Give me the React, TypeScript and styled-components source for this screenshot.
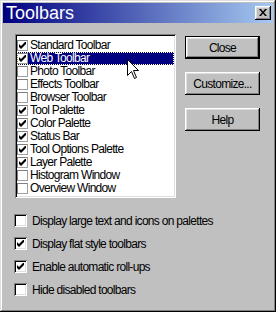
import React from "react";
import styled, { createGlobalStyle } from "styled-components";

const GlobalStyle = createGlobalStyle`
  html, body {
    margin: 0;
    padding: 0;
    background: #c0c0c0;
  }
  body {
    font-family: "Liberation Sans", Arial, sans-serif;
    font-size: 12px;
    letter-spacing: -0.7px;
    color: #000;
  }
`;

const toolbars = [
  { label: "Standard Toolbar", on: true },
  { label: "Web Toolbar", on: true, selected: true },
  { label: "Photo Toolbar", on: false },
  { label: "Effects Toolbar", on: false },
  { label: "Browser Toolbar", on: false },
  { label: "Tool Palette", on: true },
  { label: "Color Palette", on: true },
  { label: "Status Bar", on: true },
  { label: "Tool Options Palette", on: true },
  { label: "Layer Palette", on: true },
  { label: "Histogram Window", on: false },
  { label: "Overview Window", on: false },
];

const options = [
  { label: "Display large text and icons on palettes", on: false },
  { label: "Display flat style toolbars", on: true },
  { label: "Enable automatic roll-ups", on: true },
  { label: "Hide disabled toolbars", on: false },
];

const CheckMark: React.FC = () => (
  <svg width="7" height="7" viewBox="0 0 7 7">
    <path d="M0 2 L2 4 L6 0 L7 0 L7 2 L2 7 L0 5 Z" fill="#000" />
  </svg>
);

const Cursor: React.FC = () => (
  <CursorSvg width="13" height="21" viewBox="0 0 13 21">
    <path
      d="M0.5 0.5 L0.5 16.5 L4.5 12.5 L7.5 19.5 L9.5 18.5 L6.5 11.5 L11.5 11.5 Z"
      fill="#fff"
      stroke="#000"
      strokeWidth="1"
    />
  </CursorSvg>
);

const App: React.FC = () => {
  return (
    <>
      <GlobalStyle />
      <Window>
        <TitleBar>
          <Title>Toolbars</Title>
          <CloseBox>
            <svg width="8" height="7" viewBox="0 0 8 7">
              <path
                d="M0 0 L2 0 L4 2.5 L6 0 L8 0 L5 3.5 L8 7 L6 7 L4 4.5 L2 7 L0 7 L3 3.5 Z"
                fill="#000"
              />
            </svg>
          </CloseBox>
        </TitleBar>
        <Body>
          <TopRow>
            <ListBox>
              {toolbars.map((t) => (
                <ListRow key={t.label} $selected={!!t.selected}>
                  <ListCheck>{t.on && <CheckMark />}</ListCheck>
                  <span>{t.label}</span>
                </ListRow>
              ))}
            </ListBox>
            <Buttons>
              <Button $default>Close</Button>
              <Button>Customize...</Button>
              <Button>Help</Button>
            </Buttons>
          </TopRow>
          <Options>
            {options.map((o) => (
              <OptionRow key={o.label}>
                <SunkenCheck>{o.on && <CheckMark />}</SunkenCheck>
                <span>{o.label}</span>
              </OptionRow>
            ))}
          </Options>
        </Body>
        <Cursor />
      </Window>
    </>
  );
};

export default App;

const Window = styled.div`
  position: relative;
  width: 276px;
  height: 312px;
  box-sizing: border-box;
  padding: 3px;
  background: #c0c0c0;
  box-shadow: inset -1px -1px #000, inset 1px 1px #dfdfdf,
    inset -2px -2px #808080, inset 2px 2px #fff;
`;

const TitleBar = styled.div`
  height: 20px;
  display: flex;
  align-items: center;
  justify-content: space-between;
  padding: 0 2px 0 3px;
  background: linear-gradient(to right, #000080, #a6caf0);
`;

const Title = styled.span`
  color: #fff;
  font-size: 18px;
  letter-spacing: 0;
  line-height: 20px;
`;

const CloseBox = styled.div`
  width: 16px;
  height: 14px;
  box-sizing: border-box;
  display: flex;
  align-items: center;
  justify-content: center;
  background: #c0c0c0;
  box-shadow: inset -1px -1px #000, inset 1px 1px #fff,
    inset -2px -2px #808080, inset 2px 2px #dfdfdf;
  padding-bottom: 1px;
`;

const Body = styled.div`
  padding-top: 11px;
`;

const TopRow = styled.div`
  display: flex;
  margin-left: 12px;
`;

const ListBox = styled.div`
  width: 161px;
  height: 164px;
  box-sizing: border-box;
  padding: 5px 2px 3px 2px;
  background: #fff;
  box-shadow: inset 1px 1px #808080, inset -1px -1px #fff,
    inset 2px 2px #000, inset -2px -2px #dfdfdf;
`;

const ListRow = styled.div<{ $selected: boolean }>`
  height: 13px;
  line-height: 13px;
  display: flex;
  align-items: center;
  gap: 2px;
  white-space: nowrap;
  background: ${(p) => (p.$selected ? "#000080" : "transparent")};
  color: ${(p) => (p.$selected ? "#fff" : "#000")};
  outline: ${(p) => (p.$selected ? "1px dotted #ffffc0" : "none")};
  outline-offset: -1px;
`;

const ListCheck = styled.div`
  width: 11px;
  height: 11px;
  box-sizing: border-box;
  flex: none;
  display: flex;
  align-items: center;
  justify-content: center;
  background: #fff;
  border: 1px solid #808080;
  border-right-color: #a0a0a0;
  border-bottom-color: #a0a0a0;
`;

const Buttons = styled.div`
  display: flex;
  flex-direction: column;
  gap: 13px;
  margin: 2px 0 0 9px;
`;

const Button = styled.div<{ $default?: boolean }>`
  width: 75px;
  height: 23px;
  box-sizing: border-box;
  display: flex;
  align-items: center;
  justify-content: center;
  background: #c0c0c0;
  border: ${(p) => (p.$default ? "1px solid #000" : "none")};
  box-shadow: inset -1px -1px #000, inset 1px 1px #fff,
    inset -2px -2px #808080, inset 2px 2px #dfdfdf;
`;

const Options = styled.div`
  display: flex;
  flex-direction: column;
  gap: 10px;
  margin: 16px 0 0 11px;
`;

const OptionRow = styled.div`
  display: flex;
  align-items: center;
  gap: 5px;
  height: 13px;
  white-space: nowrap;
`;

const SunkenCheck = styled.div`
  width: 13px;
  height: 13px;
  box-sizing: border-box;
  flex: none;
  display: flex;
  align-items: center;
  justify-content: center;
  background: #fff;
  box-shadow: inset 1px 1px #808080, inset -1px -1px #fff,
    inset 2px 2px #000, inset -2px -2px #dfdfdf;
`;

const CursorSvg = styled.svg`
  position: absolute;
  left: 127px;
  top: 59px;
`;
